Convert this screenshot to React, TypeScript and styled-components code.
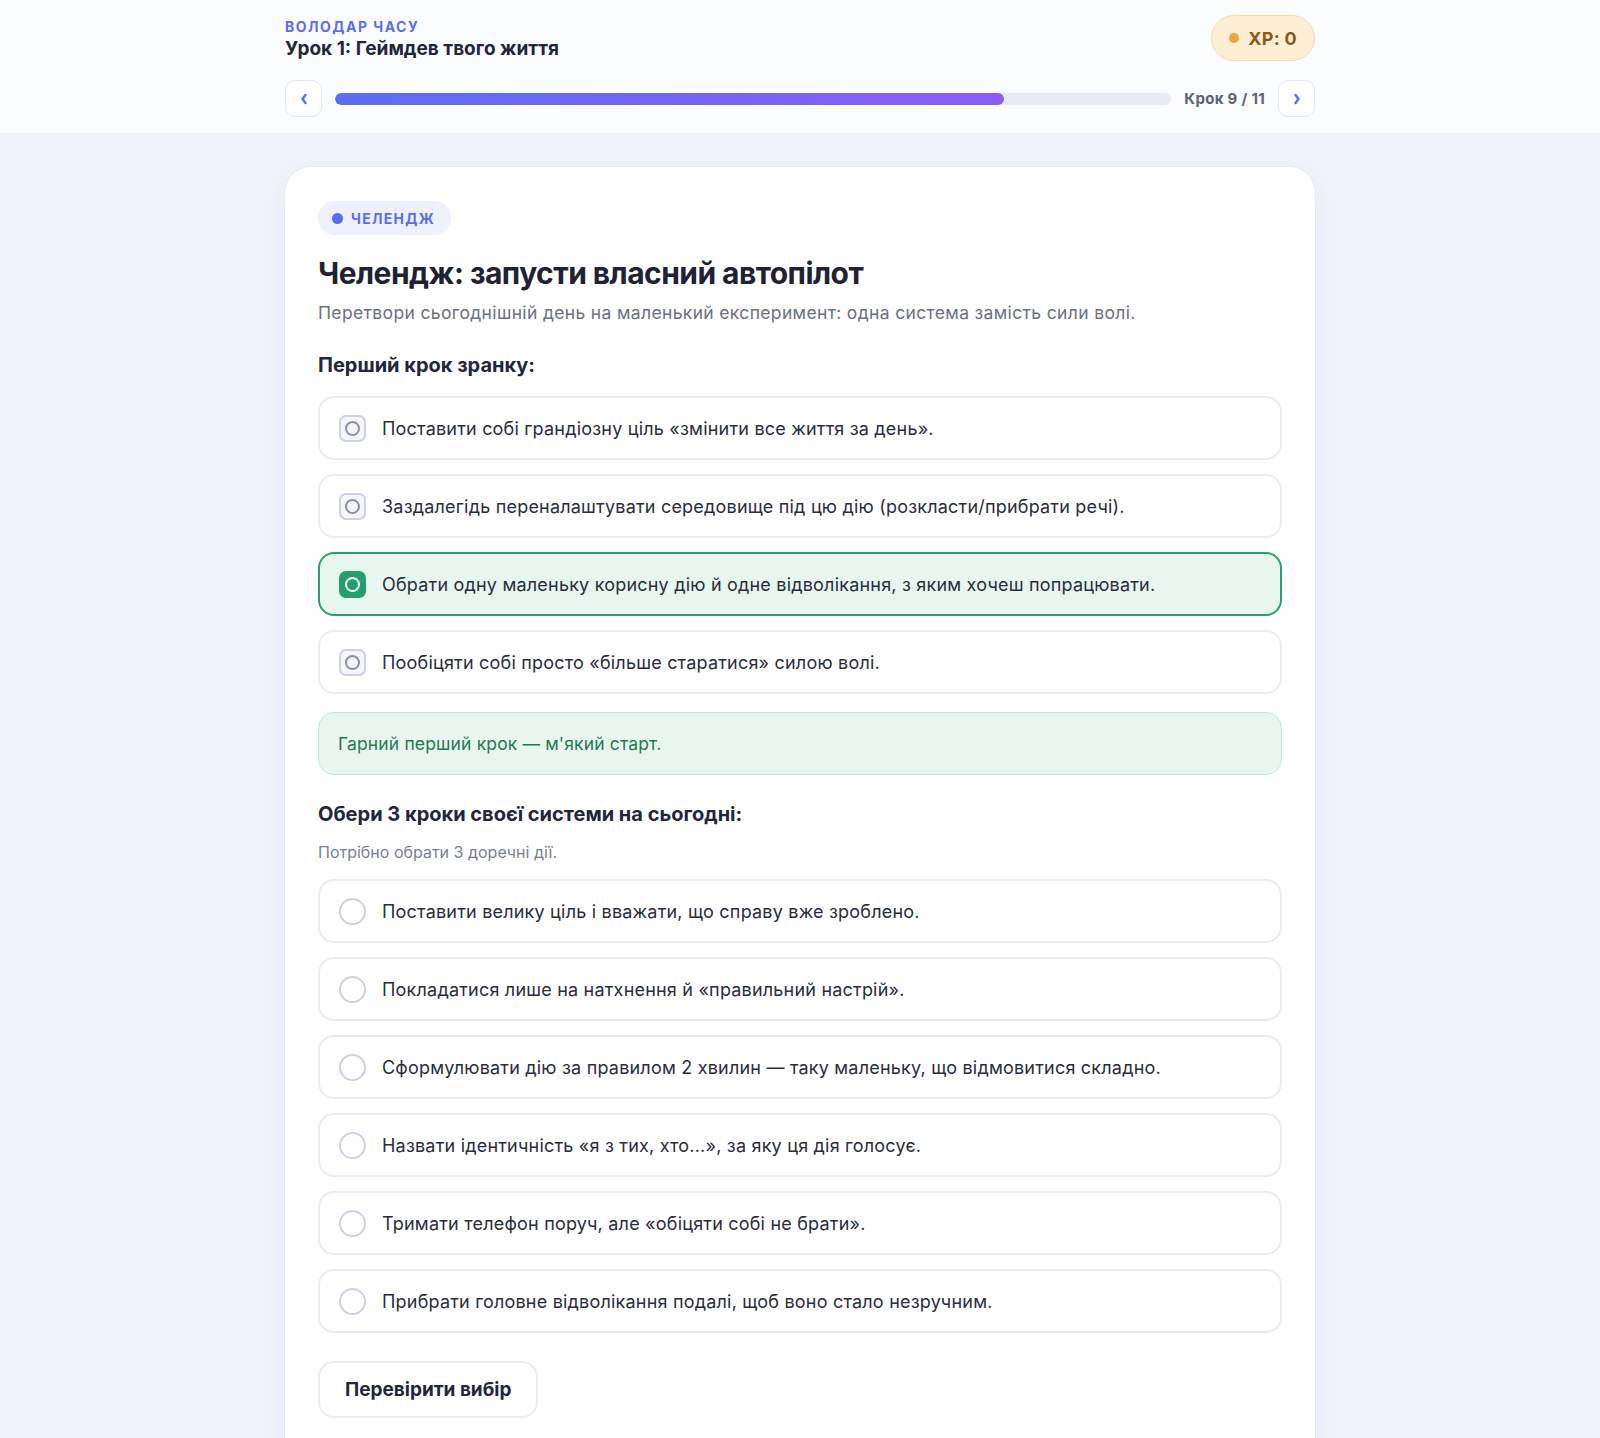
import styled, { createGlobalStyle } from "styled-components"

const GlobalStyle = createGlobalStyle`
  * { box-sizing: border-box; }
  body {
    margin: 0;
    background: #f2f4fb;
    font-family: Inter, "Noto Sans", "Liberation Sans", sans-serif;
    color: #23263a;
  }
`

const Page = styled.div`
  min-height: 1438px;
  background: #f2f4fb;
`

const Header = styled.header`
  background: #fbfcfe;
  border-bottom: 1px solid #eceef5;
  padding: 15px 0 16px;
`

const Container = styled.div`
  width: 1030px;
  margin: 0 auto;
`

const TopRow = styled.div`
  display: flex;
  align-items: center;
  justify-content: space-between;
  height: 46px;
`

const Course = styled.div`
  font-size: 14px;
  font-weight: 700;
  letter-spacing: 1.5px;
  color: #5b6cf0;
  line-height: 17px;
  margin-top: 2px;
`

const LessonTitle = styled.div`
  font-size: 19px;
  font-weight: 700;
  color: #23263a;
  line-height: 24px;
  margin-top: 2px;
`

const XpPill = styled.div`
  display: flex;
  align-items: center;
  gap: 9px;
  height: 46px;
  padding: 0 17px;
  border-radius: 23px;
  background: #fdefd6;
  border: 1px solid #f6dcaa;
  color: #8a5a15;
  font-size: 18px;
  font-weight: 700;
  letter-spacing: 0.3px;
`

const Dot = styled.span<{ $color: string; $size: number }>`
  width: ${p => p.$size}px;
  height: ${p => p.$size}px;
  border-radius: 50%;
  background: ${p => p.$color};
  flex: none;
`

const ProgressRow = styled.div`
  display: flex;
  align-items: center;
  gap: 13px;
  margin-top: 19px;
`

const NavButton = styled.button`
  width: 37px;
  height: 37px;
  border-radius: 10px;
  border: 1px solid #e6e8f0;
  background: #ffffff;
  color: #5b6cf0;
  display: flex;
  align-items: center;
  justify-content: center;
  padding: 0;
  flex: none;
`

const Track = styled.div`
  flex: 1;
  height: 12px;
  border-radius: 6px;
  background: #e8e9f3;
  overflow: hidden;
`

const Fill = styled.div`
  height: 100%;
  border-radius: 6px;
  background: linear-gradient(90deg, #5b6cf5, #8b5cf6);
`

const StepLabel = styled.div`
  font-size: 15px;
  font-weight: 700;
  letter-spacing: 0.3px;
  color: #5d6275;
  white-space: nowrap;
`

const Main = styled.main`
  padding-top: 33px;
`

const Card = styled.section`
  background: #ffffff;
  border-radius: 26px 26px 0 0;
  box-shadow: 0 8px 30px rgba(40, 50, 110, 0.06), 0 0 0 1px rgba(230, 232, 242, 0.6);
  padding: 34px 33px 40px;
`

const Badge = styled.div`
  display: inline-flex;
  align-items: center;
  gap: 8px;
  height: 34px;
  padding: 0 16px 0 14px;
  border-radius: 17px;
  background: #eef0fd;
  color: #5b6cf0;
  font-size: 14px;
  font-weight: 700;
  letter-spacing: 1.3px;
`

const Title = styled.h1`
  margin: 20px 0 0;
  font-size: 30px;
  line-height: 36px;
  font-weight: 700;
  color: #1f2232;
  letter-spacing: -0.55px;
`

const Lead = styled.p`
  margin: 10px 0 0;
  font-size: 17.5px;
  line-height: 24px;
  letter-spacing: 0.35px;
  color: #6b7080;
`

const SectionTitle = styled.h2<{ $top: number }>`
  margin: ${p => p.$top}px 0 0;
  font-size: 20px;
  line-height: 26px;
  font-weight: 700;
  color: #23263a;
`

const Hint = styled.p`
  margin: 15px 0 0;
  font-size: 16px;
  line-height: 20px;
  color: #7a7f8f;
`

const OptionList = styled.div<{ $top: number }>`
  display: flex;
  flex-direction: column;
  gap: 14px;
  margin-top: ${p => p.$top}px;
`

const Option = styled.div<{ $selected?: boolean }>`
  display: flex;
  align-items: center;
  gap: 16px;
  height: 64px;
  padding: 0 19px;
  border-radius: 16px;
  border: 2px solid ${p => (p.$selected ? "#2f9e6d" : "#eaecf3")};
  background: ${p => (p.$selected ? "#e7f6ee" : "#ffffff")};
  font-size: 18px;
  letter-spacing: 0.2px;
  color: #2a2d3c;
`

const SquareMark = styled.span<{ $selected?: boolean }>`
  width: 27px;
  height: 27px;
  border-radius: 7px;
  flex: none;
  display: flex;
  align-items: center;
  justify-content: center;
  background: ${p => (p.$selected ? "#22a06b" : "#f5f6fc")};
  border: 2px solid ${p => (p.$selected ? "#22a06b" : "#cdd0e6")};

  &::after {
    content: "";
    width: 11px;
    height: 11px;
    border-radius: 50%;
    border: 2px solid ${p => (p.$selected ? "#ffffff" : "#8b8fa6")};
  }
`

const RoundMark = styled.span`
  width: 27px;
  height: 27px;
  border-radius: 50%;
  border: 2px solid #cdd0e6;
  background: #ffffff;
  flex: none;
`

const Feedback = styled.div`
  margin-top: 18px;
  height: 63px;
  display: flex;
  align-items: center;
  padding: 0 19px;
  border-radius: 16px;
  background: #e8f6ef;
  border: 1px solid #c4e8d5;
  color: #1f7a50;
  font-size: 17.5px;
  letter-spacing: 0.15px;
`

const CheckButton = styled.button`
  margin-top: 28px;
  height: 57px;
  padding: 0 25px;
  border-radius: 16px;
  border: 2px solid #eaecf3;
  background: #ffffff;
  font-family: inherit;
  font-size: 19px;
  font-weight: 700;
  color: #23263a;
`

const morning = [
  "Поставити собі грандіозну ціль «змінити все життя за день».",
  "Заздалегідь переналаштувати середовище під цю дію (розкласти/прибрати речі).",
  "Обрати одну маленьку корисну дію й одне відволікання, з яким хочеш попрацювати.",
  "Пообіцяти собі просто «більше старатися» силою волі.",
]

const system = [
  "Поставити велику ціль і вважати, що справу вже зроблено.",
  "Покладатися лише на натхнення й «правильний настрій».",
  "Сформулювати дію за правилом 2 хвилин — таку маленьку, що відмовитися складно.",
  "Назвати ідентичність «я з тих, хто...», за яку ця дія голосує.",
  "Тримати телефон поруч, але «обіцяти собі не брати».",
  "Прибрати головне відволікання подалі, щоб воно стало незручним.",
]

const Chevron = ({ dir }: { dir: "left" | "right" }) => (
  <svg width="10" height="14" viewBox="0 0 10 14" fill="none">
    <path
      d={dir === "left" ? "M6.5 3 3.5 7l3 4" : "M3.5 3 6.5 7l-3 4"}
      stroke="currentColor"
      strokeWidth="2.4"
      strokeLinecap="round"
      strokeLinejoin="round"
    />
  </svg>
)

const App = () => {
  const step = 9
  const total = 11
  const progress = 0.8

  return (
    <Page>
      <GlobalStyle />
      <Header>
        <Container>
          <TopRow>
            <div>
              <Course>ВОЛОДАР ЧАСУ</Course>
              <LessonTitle>Урок 1: Геймдев твого життя</LessonTitle>
            </div>
            <XpPill>
              <Dot $color="#f0a53a" $size={10} />
              XP: 0
            </XpPill>
          </TopRow>
          <ProgressRow>
            <NavButton><Chevron dir="left" /></NavButton>
            <Track>
              <Fill style={{ width: `${progress * 100}%` }} />
            </Track>
            <StepLabel>Крок {step} / {total}</StepLabel>
            <NavButton><Chevron dir="right" /></NavButton>
          </ProgressRow>
        </Container>
      </Header>

      <Main>
        <Container>
          <Card>
            <Badge>
              <Dot $color="#5b6cf0" $size={11} />
              ЧЕЛЕНДЖ
            </Badge>
            <Title>Челендж: запусти власний автопілот</Title>
            <Lead>Перетвори сьогоднішній день на маленький експеримент: одна система замість сили волі.</Lead>

            <SectionTitle $top={27}>Перший крок зранку:</SectionTitle>
            <OptionList $top={18}>
              {morning.map((text, i) => (
                <Option key={i} $selected={i === 2}>
                  <SquareMark $selected={i === 2} />
                  {text}
                </Option>
              ))}
            </OptionList>
            <Feedback>Гарний перший крок — м'який старт.</Feedback>

            <SectionTitle $top={26}>Обери 3 кроки своєї системи на сьогодні:</SectionTitle>
            <Hint>Потрібно обрати 3 доречні дії.</Hint>
            <OptionList $top={17}>
              {system.map((text, i) => (
                <Option key={i}>
                  <RoundMark />
                  {text}
                </Option>
              ))}
            </OptionList>
            <CheckButton>Перевірити вибір</CheckButton>
          </Card>
        </Container>
      </Main>
    </Page>
  )
}

export default App
